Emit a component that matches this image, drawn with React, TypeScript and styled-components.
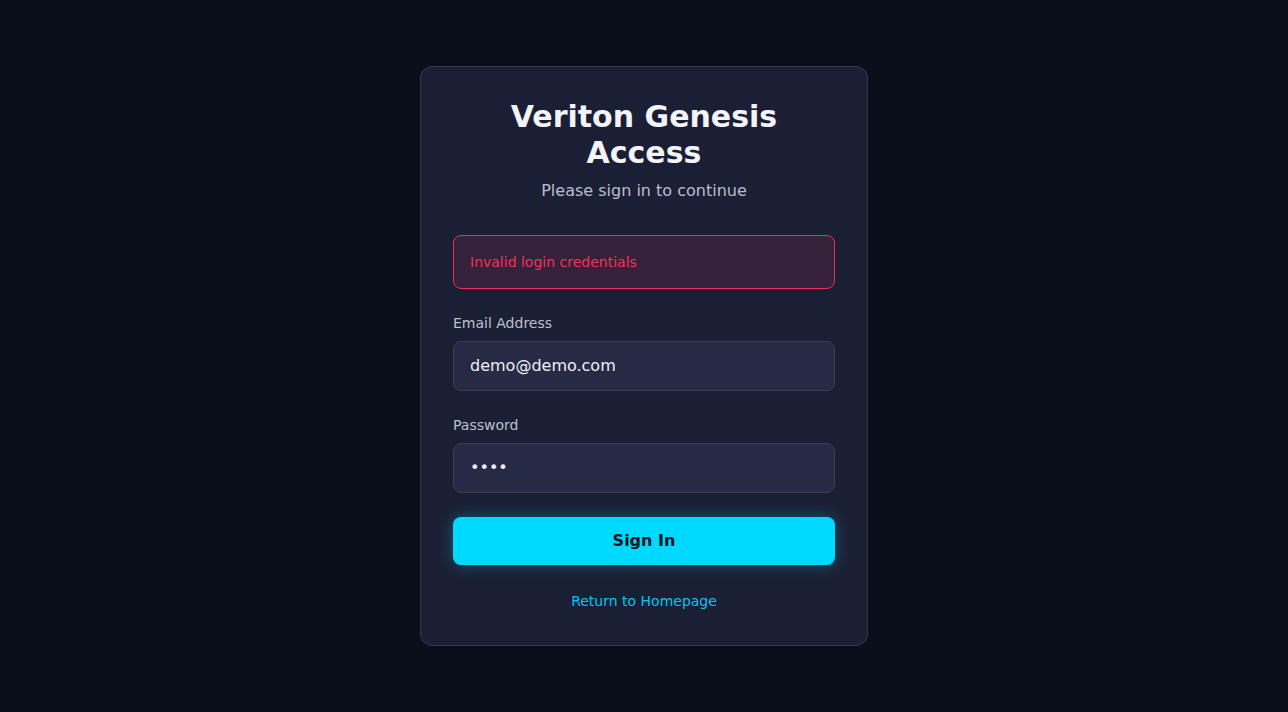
import React from "react";
import styled, { createGlobalStyle } from "styled-components";

const GlobalStyle = createGlobalStyle`
  * {
    box-sizing: border-box;
  }

  body {
    margin: 0;
    background-color: #0a0e1a;
    font-family: "DejaVu Sans", "Noto Sans", sans-serif;
  }
`;

const App: React.FC = () => {
  return (
    <>
      <GlobalStyle />
      <Page>
        <Card>
          <Header>
            <Title>Veriton Genesis Access</Title>
            <Subtitle>Please sign in to continue</Subtitle>
          </Header>

          <ErrorBox>Invalid login credentials</ErrorBox>

          <Form onSubmit={(e) => e.preventDefault()}>
            <Field>
              <Label htmlFor="email">Email Address</Label>
              <Input id="email" type="email" defaultValue="demo@demo.com" />
            </Field>

            <Field>
              <Label htmlFor="password">Password</Label>
              <Input id="password" type="password" defaultValue="demo" />
            </Field>

            <SubmitButton type="submit">Sign In</SubmitButton>
          </Form>

          <Footer>
            <HomeLink href="#">Return to Homepage</HomeLink>
          </Footer>
        </Card>
      </Page>
    </>
  );
};

const Page = styled.main`
  min-height: 100vh;
  display: flex;
  align-items: center;
  justify-content: center;
  padding: 16px;
`;

const Card = styled.section`
  width: 100%;
  max-width: 448px;
  padding: 32px;
  background-color: #1b1f35;
  border: 1px solid #33374c;
  border-radius: 12px;
`;

const Header = styled.div`
  text-align: center;
  margin-bottom: 32px;
`;

const Title = styled.h1`
  max-width: 330px;
  margin: 0 auto;
  font-size: 30px;
  line-height: 36px;
  font-weight: 700;
  color: #f3f4f8;
`;

const Subtitle = styled.p`
  margin: 8px 0 0 0;
  font-size: 16px;
  line-height: 24px;
  color: #b9bdcd;
`;

const ErrorBox = styled.div`
  padding: 16px;
  margin-bottom: 24px;
  font-size: 14px;
  line-height: 20px;
  color: #f2325a;
  background-color: #352139;
  border: 1px solid #ee2f55;
  border-radius: 8px;
`;

const Form = styled.form`
  display: flex;
  flex-direction: column;
  gap: 24px;
`;

const Field = styled.div`
  display: flex;
  flex-direction: column;
  gap: 8px;
`;

const Label = styled.label`
  font-size: 14px;
  line-height: 20px;
  color: #bcc0d0;
`;

const Input = styled.input`
  width: 100%;
  padding: 12px 16px;
  font-family: inherit;
  font-size: 16px;
  line-height: 24px;
  color: #eef0f6;
  background-color: #262a45;
  border: 1px solid #3a3e56;
  border-radius: 8px;
  outline: none;
`;

const SubmitButton = styled.button`
  width: 100%;
  padding: 12px;
  font-family: inherit;
  font-size: 16px;
  line-height: 24px;
  font-weight: 700;
  color: #0f1424;
  background-color: #00d9ff;
  border: none;
  border-radius: 8px;
  box-shadow: 0 0 16px rgba(0, 217, 255, 0.3);
  cursor: pointer;
`;

const Footer = styled.div`
  margin-top: 24px;
  text-align: center;
  font-size: 14px;
  line-height: 24px;
`;

const HomeLink = styled.a`
  color: #00c8f0;
  text-decoration: none;
`;

export default App;
